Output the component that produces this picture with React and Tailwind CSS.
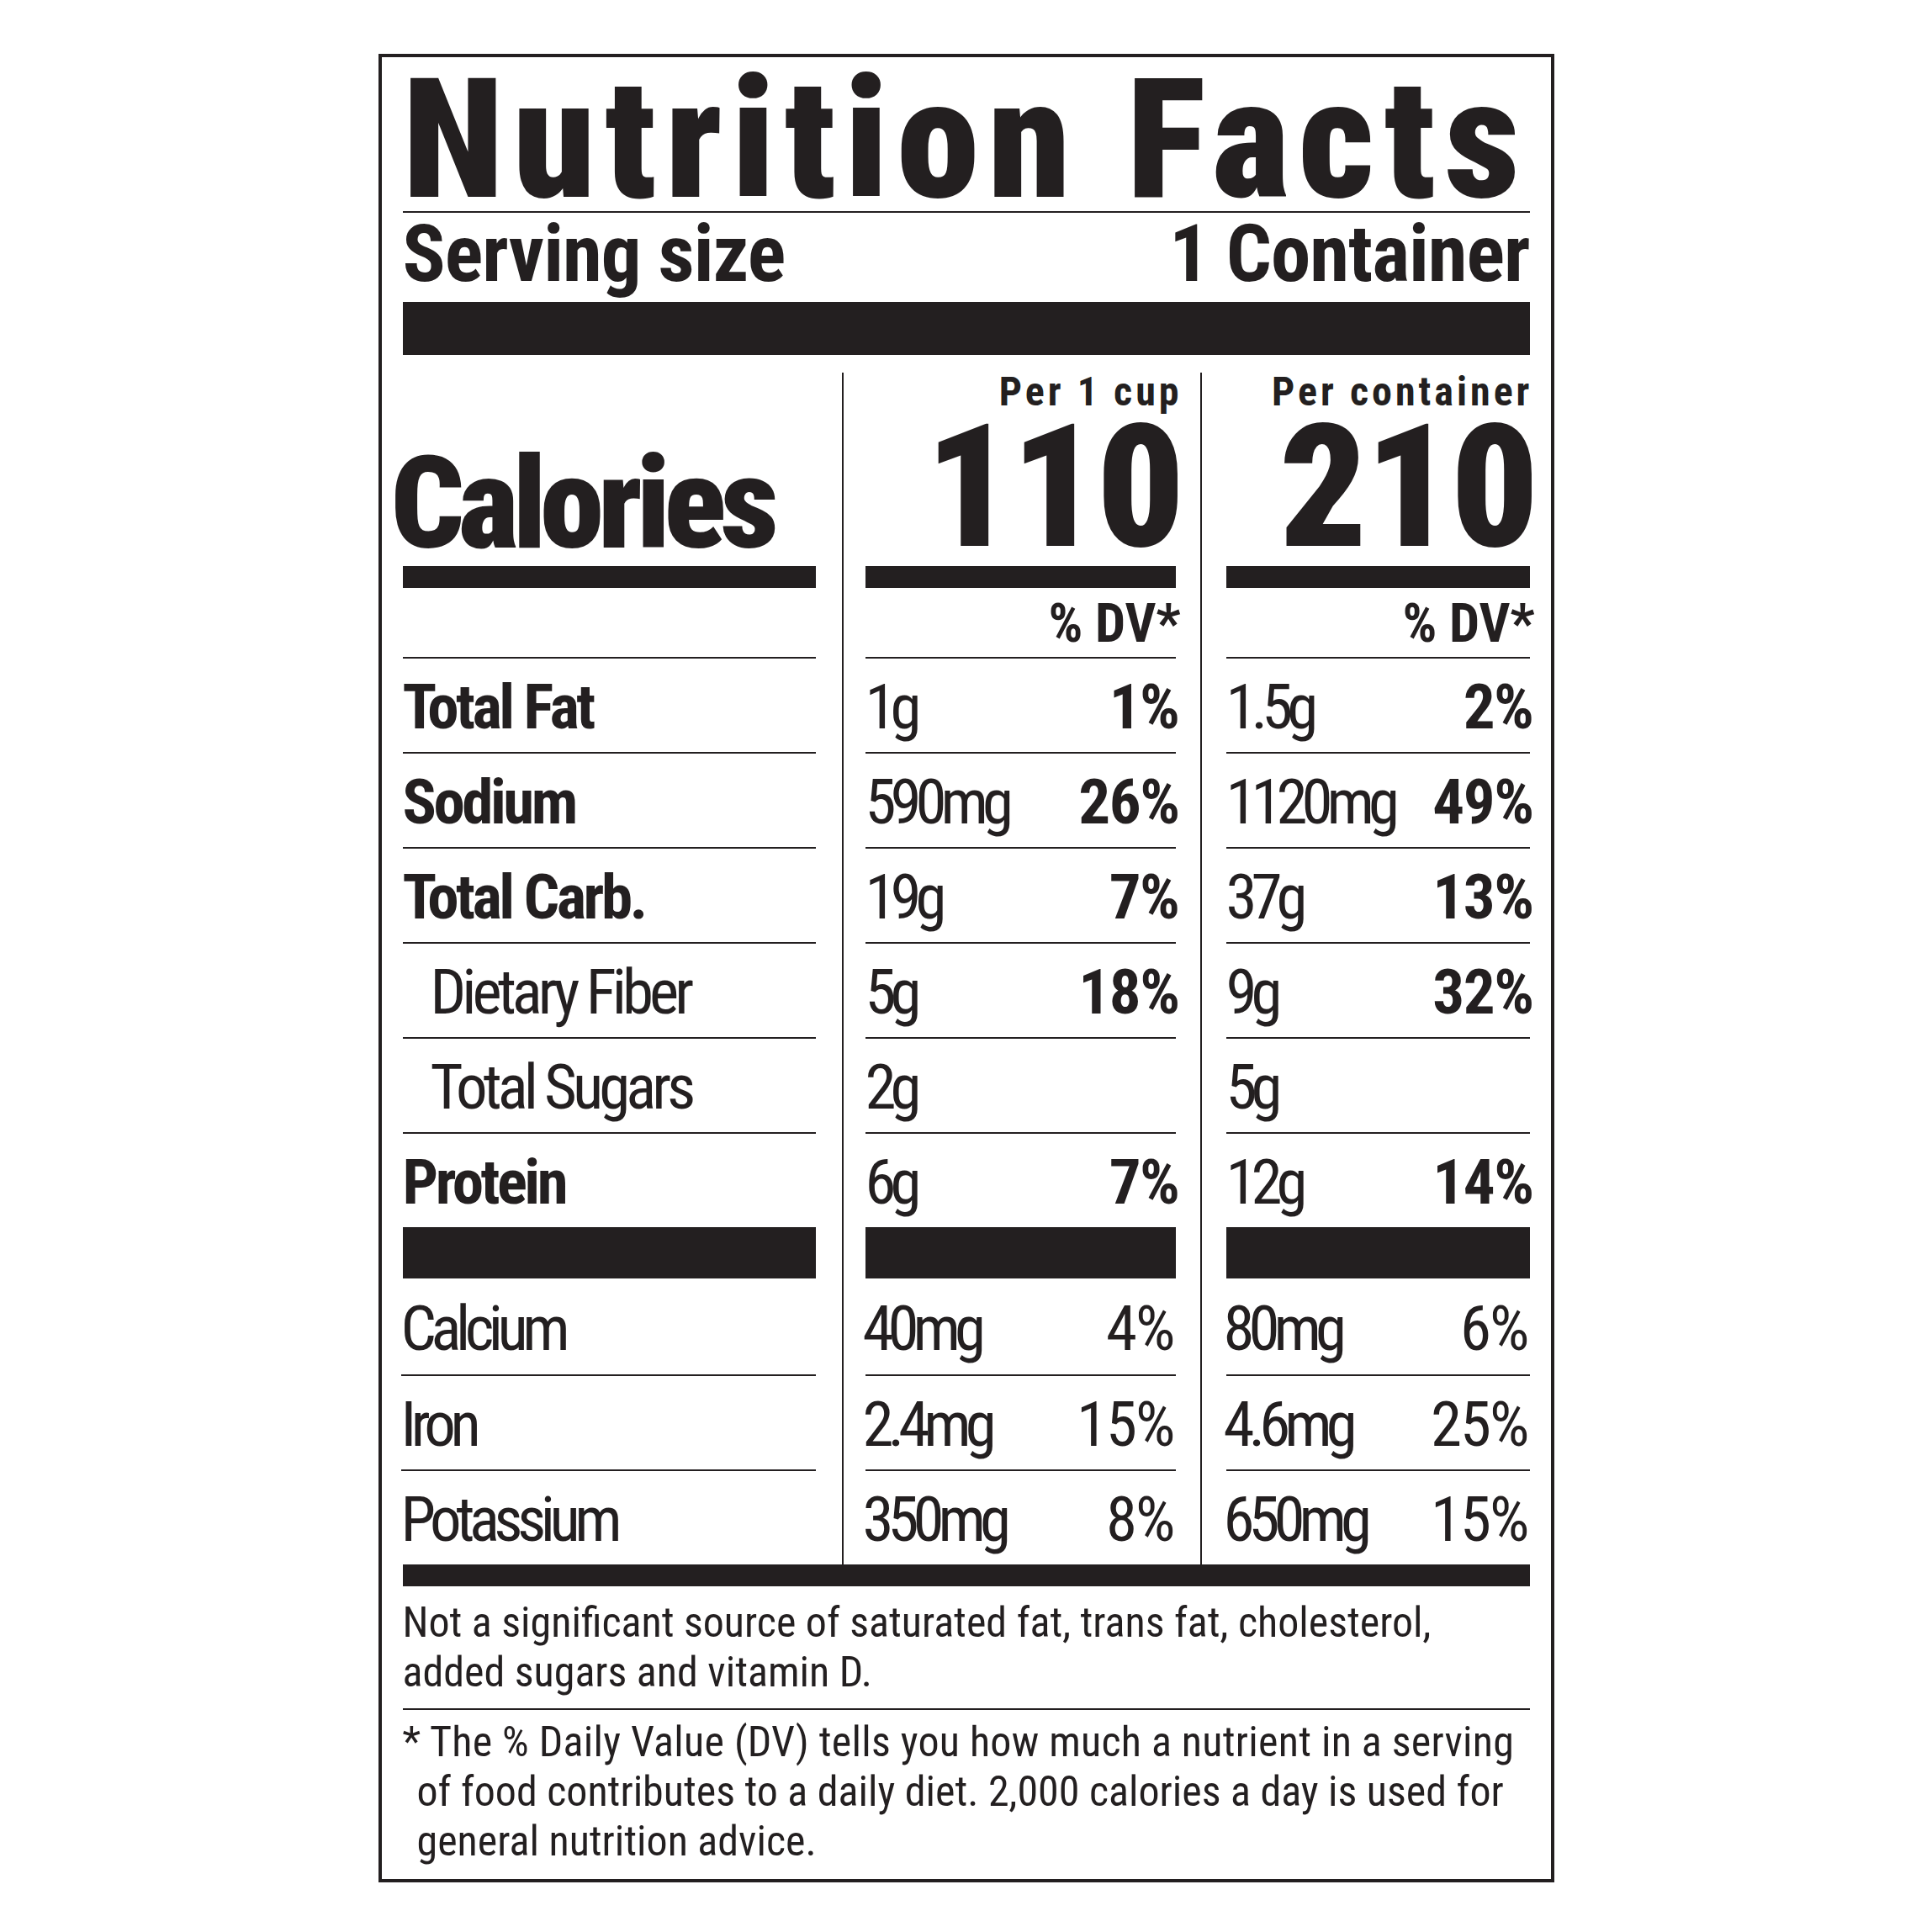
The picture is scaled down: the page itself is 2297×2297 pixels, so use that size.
import React from "react";

const nutrients = [
  { name: "Total Fat", bold: true, cup: ["1g", "1%"], box: ["1.5g", "2%"] },
  { name: "Sodium", bold: true, cup: ["590mg", "26%"], box: ["1120mg", "49%"] },
  { name: "Total Carb.", bold: true, cup: ["19g", "7%"], box: ["37g", "13%"] },
  { name: "Dietary Fiber", bold: false, cup: ["5g", "18%"], box: ["9g", "32%"] },
  { name: "Total Sugars", bold: false, cup: ["2g", ""], box: ["5g", ""] },
  { name: "Protein", bold: true, cup: ["6g", "7%"], box: ["12g", "14%"] },
];

const minerals = [
  { name: "Calcium", cup: ["40mg", "4%"], box: ["80mg", "6%"] },
  { name: "Iron", cup: ["2.4mg", "15%"], box: ["4.6mg", "25%"] },
  { name: "Potassium", cup: ["350mg", "8%"], box: ["650mg", "15%"] },
];

const Bar = ({ className }) => <div className={"bg-[#231f20] " + className} />;

// left column: labels
const LabelColumn = () => (
  <div className="w-[522px] shrink-0 pr-[31px] flex flex-col">
    <div className="h-[230px] pt-[83px]">
      <div className="leading-[146px] text-[153px] font-black tracking-[-7px] -ml-[14px] whitespace-nowrap">Calories</div>
    </div>
    <Bar className="h-[26px]" />
    <div className="h-[82px]" />
    {nutrients.map((n) => (
      <div
        key={n.name}
        className={
          "h-[113px] border-t-2 border-[#231f20] pt-[4px] leading-[106px] text-[75px] whitespace-nowrap " +
          (n.bold ? "font-bold tracking-[-3.5px]" : "pl-[33px] tracking-[-5px]")
        }
      >
        {n.name}
      </div>
    ))}
    <Bar className="h-[61px]" />
    {minerals.map((m, i) => (
      <div
        key={m.name}
        className={
          i === 0
            ? "h-[114px] pt-[6px] leading-[106px] text-[75px] tracking-[-6.5px] -ml-[2px]"
            : "h-[113px] border-t-2 border-[#231f20] pt-[4px] leading-[106px] text-[75px] tracking-[-6.5px] -ml-[2px]"
        }
      >
        {m.name}
      </div>
    ))}
  </div>
);

// middle / right column: amounts and % DV
const ValueColumn = ({ title, calories, field, titleClass, className }) => (
  <div className={"shrink-0 min-w-0 border-l-2 border-[#231f20] flex flex-col " + className}>
    <div className="h-[230px] flex flex-col items-end">
      <div className={"leading-[45px] text-[48px] font-bold tracking-[4px] whitespace-nowrap " + titleClass}>{title}</div>
      <div className="leading-[182px] text-[205px] font-black tracking-[-3px] -mr-[8px]">{calories}</div>
    </div>
    <Bar className="h-[26px]" />
    <div className="h-[82px] pt-[3px] flex justify-end">
      <span className="leading-[80px] text-[64px] font-bold -mr-[6px] whitespace-nowrap">% DV*</span>
    </div>
    {nutrients.map((n) => (
      <div
        key={n.name}
        className="h-[113px] border-t-2 border-[#231f20] pt-[4px] flex justify-between leading-[106px] text-[75px] whitespace-nowrap"
      >
        <span className="tracking-[-7px]">{n[field][0]}</span>
        <span className="font-bold tracking-[-1.5px] -mr-[4px]">{n[field][1]}</span>
      </div>
    ))}
    <Bar className="h-[61px]" />
    {minerals.map((m, i) => (
      <div
        key={m.name}
        className={
          "flex justify-between leading-[106px] text-[75px] whitespace-nowrap " +
          (i === 0 ? "h-[114px] pt-[6px]" : "h-[113px] border-t-2 border-[#231f20] pt-[4px]")
        }
      >
        <span className="tracking-[-7px] -ml-[3px]">{m[field][0]}</span>
        <span className="tracking-[-2px] mr-[2px]">{m[field][1]}</span>
      </div>
    ))}
  </div>
);

export default function App() {
  return (
    <div className="min-h-[2297px] bg-white flex justify-center pt-[64px] text-[#231f20] font-['Roboto_Condensed','Noto_Sans',sans-serif] font-stretch-condensed">
      <div className="w-[1398px] h-[2174px] border-4 border-[#231f20] pl-[25px] pr-[25px]">
        <div className="h-[183px] pt-[14px] leading-[169px] text-[198px] font-black tracking-[10.5px] whitespace-nowrap">
          Nutrition Facts
        </div>
        <Bar className="h-[2px]" />
        <div className="h-[106px] flex justify-between leading-[98px] text-[95px] font-bold tracking-[-1px] whitespace-nowrap">
          <span>Serving size</span>
          <span>1 Container</span>
        </div>
        <Bar className="h-[63px]" />

        <div className="pt-[21px] flex">
          <LabelColumn />
          <ValueColumn
            title="Per 1 cup"
            calories="110"
            field="cup"
            titleClass="-mr-[8px]"
            className="w-[426px] pl-[26px] pr-[29px]"
          />
          <ValueColumn
            title="Per container"
            calories="210"
            field="box"
            titleClass="-mr-[4px]"
            className="w-[392px] pl-[29px]"
          />
        </div>
        <Bar className="h-[26px]" />

        <div className="h-[145px] pt-[14px] leading-[59px] text-[50px] whitespace-nowrap">
          <div>Not a significant source of saturated fat, trans fat, cholesterol,</div>
          <div>added sugars and vitamin D.</div>
        </div>
        <Bar className="h-[2px]" />
        <div className="pt-[9px] pb-[14px] leading-[59px] text-[50px] whitespace-nowrap">
          <div className="tracking-[0.25px]">* The % Daily Value (DV) tells you how much a nutrient in a serving</div>
          <div className="pl-[17px]">of food contributes to a daily diet. 2,000 calories a day is used for</div>
          <div className="pl-[17px]">general nutrition advice.</div>
        </div>
      </div>
    </div>
  );
}
